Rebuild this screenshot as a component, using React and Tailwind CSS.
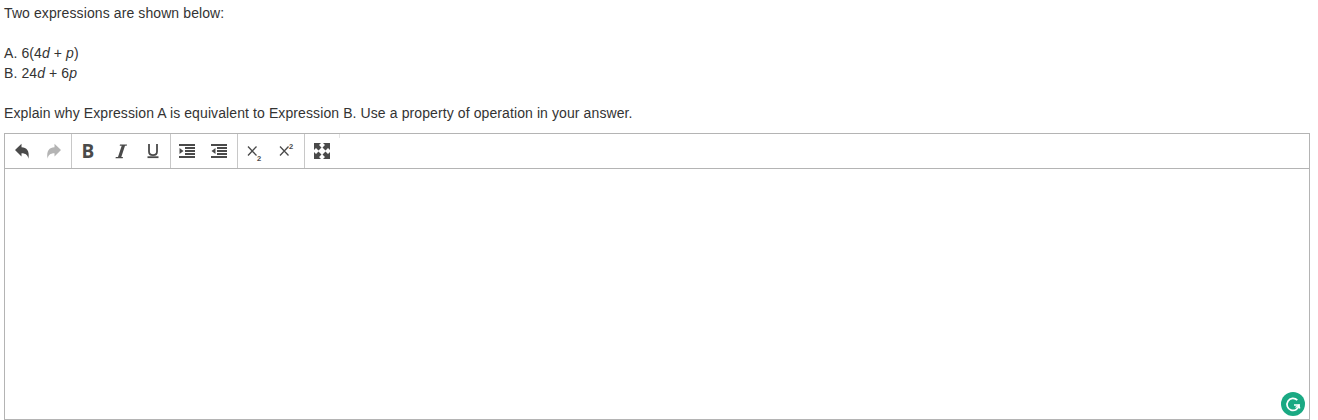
const Btn = ({ children }) => (
  <div className="w-8 h-[34px] flex items-center justify-center relative">{children}</div>
);

const Icon = ({ children, size = 18, color = "#4a4a4a" }) => (
  <svg width={size} height={size} viewBox="0 0 18 18" fill={color}>{children}</svg>
);

const Undo = ({ color, flip }) => (
  <Icon color={color}>
    <path
      transform={flip ? "translate(18 0) scale(-1 1)" : undefined}
      d="M2 8 8.500 1.800V5.300C13.500 5.300 16.800 8.500 15.500 16.800 14.800 13.500 13 11.300 8.500 11.300V14.500Z"
    />
  </Icon>
);

const Indent = ({ out }) => (
  <svg className="ml-[1px]" width="17" height="18" viewBox="1 0 17 18" fill="#4a4a4a" shapeRendering="crispEdges">
    <path d="M1 2h16v2H1zM6.500 5H17v2H6.500zM6.500 8H17v2H6.500zM6.500 11H17v2H6.500zM1 14h16v2H1z" />
    <path shapeRendering="auto" d={out ? "M5.500 6v6L1.500 9z" : "M1.500 6v6l4-3z"} />
  </svg>
);

const Script = ({ up }) => (
  <>
    <svg width="18" height="18" viewBox="0 0 18 18" fill="none" stroke="#4a4a4a">
      <path d="M3 4.500 11.500 13.500M11.500 4.500 3 13.500" strokeWidth="1.300" />
    </svg>
    <span className={`absolute left-[19px] text-[7.500px] leading-none text-[#4a4a4a] font-bold ${up ? "top-[9px]" : "top-[21px]"}`}>2</span>
  </>
);

const Arrow = ({ t }) => (
  <path transform={t} d="M1 1h7L6 3 8.500 5.500 5.500 8.500 3 6 1 8z" />
);

const Fullscreen = () => (
  <Icon>
    <Arrow />
    <Arrow t="translate(18 0) scale(-1 1)" />
    <Arrow t="translate(0 18) scale(1 -1)" />
    <Arrow t="translate(18 18) scale(-1 -1)" />
  </Icon>
);

const Group = ({ children, pad = "pr-[2px]", last }) => (
  <div className={`flex h-[34px] ${pad} ${last ? "" : "border-r border-[#c8c8c8]"}`}>{children}</div>
);

export default function App() {
  return (
    <div className="bg-white h-[420px] overflow-hidden pl-1 pr-2 pt-[3px] text-[14px] tracking-[0.1px] leading-5 text-[#333]" style={{ fontFamily: '"Liberation Sans", Arial, sans-serif' }}>
      <div>Two expressions are shown below:</div>
      <div className="h-5" />
      <div>A. 6(4<i>d</i> + <i>p</i>)</div>
      <div>B. 24<i>d</i> + 6<i>p</i></div>
      <div className="h-5" />
      <div>Explain why Expression A is equivalent to Expression B. Use a property of operation in your answer.</div>
      <div className="mt-[10px] border border-[#b4b4b4] h-[287px] flex flex-col relative">
        <div className="flex items-start h-[35px] border-b border-[#b4b4b4] shrink-0 relative">
          <Group pad="pr-[1px]">
            <div className="w-[1px]" />
            <Btn><Undo color="#4a4a4a" /></Btn>
            <Btn><Undo color="#b4b4b4" flip /></Btn>
          </Group>
          <Group>
            <Btn><span className="text-[#4a4a4a] font-bold text-[19px] leading-none" style={{ fontFamily: '"Open Sans", sans-serif' }}>B</span></Btn>
            <Btn>
              <svg width="18" height="18" viewBox="0 0 18 18" fill="#4a4a4a"><path d="M9 2.500h7l-.3 1.200h-1.700L10.300 15h1.700l-.3 1.200H4.500l.3-1.200h2.200L10.700 3.700H8.700z" /></svg>
            </Btn>
            <Btn>
              <svg width="18" height="18" viewBox="0 0 18 18" fill="none" stroke="#4a4a4a" strokeWidth="1.800"><path d="M6 2v7.500c0 2.600 1.300 3.600 4 3.600s4-1 4-3.600V2" /><path d="M4.500 15.200h11" /></svg>
            </Btn>
          </Group>
          <Group>
            <Btn><Indent /></Btn>
            <Btn><Indent out /></Btn>
          </Group>
          <Group>
            <Btn><Script /></Btn>
            <Btn><Script up /></Btn>
          </Group>
          <Group last>
            <div className="w-[1px]" />
            <Btn><Fullscreen /></Btn>
          </Group>
          <div className="absolute left-[334px] top-0 w-[1px] h-[4px] bg-[#e4e4e4]" />
        </div>
        <div className="flex-1" />
        <div className="absolute right-[4px] bottom-[3px] w-6 h-6 rounded-full bg-[#1aa983] flex items-center justify-center">
          <svg width="16" height="16" viewBox="0 0 16 16" fill="none" stroke="#fff" strokeWidth="1.700">
            <path d="M12.300 4.200A6 6 0 1 0 14 9H9" />
            <path d="M10.500 11.500 14 9l.8 3.500" strokeWidth="1.200" />
          </svg>
        </div>
      </div>
    </div>
  );
}
